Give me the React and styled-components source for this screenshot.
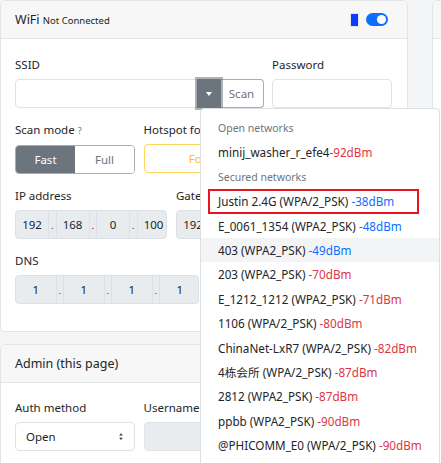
import styled, { createGlobalStyle } from "styled-components"

const GlobalStyle = createGlobalStyle`
  html, body {
    margin: 0;
    padding: 0;
    background: #f4f5f6;
    overflow: hidden;
  }
  body {
    font-family: "Noto Sans", "Open Sans", "Noto Sans CJK SC", sans-serif;
    font-size: 11.5px;
    color: #212529;
  }
`

const networks = [
  { name: "Justin 2.4G (WPA/2_PSK)", rssi: -38, marked: true },
  { name: "E_0061_1354 (WPA2_PSK)", rssi: -48 },
  { name: "403 (WPA2_PSK)", rssi: -49, hover: true },
  { name: "203 (WPA2_PSK)", rssi: -70 },
  { name: "E_1212_1212 (WPA2_PSK)", rssi: -71 },
  { name: "1106 (WPA/2_PSK)", rssi: -80 },
  { name: "ChinaNet-LxR7 (WPA/2_PSK)", rssi: -82 },
  { name: "4栋会所 (WPA/2_PSK)", rssi: -87 },
  { name: "2812 (WPA2_PSK)", rssi: -87 },
  { name: "ppbb (WPA2_PSK)", rssi: -90 },
  { name: "@PHICOMM_E0 (WPA/2_PSK)", rssi: -90 },
]

const IpGroup = ({ parts, cell }) => (
  <Segments>
    {parts.map((p, i) => [
      i > 0 && <Dot key={"d" + i}>.</Dot>,
      <Octet key={"o" + i} $w={cell}>
        {p}
      </Octet>,
    ])}
  </Segments>
)

export default function App() {
  return (
    <>
      <GlobalStyle />
      <Page>
        <Column>
          <Card>
            <CardHeader>
              <span>
                WiFi <Small>Not Connected</Small>
              </span>
              <HeaderTools>
                <BlueMark />
                <Switch />
              </HeaderTools>
            </CardHeader>
            <CardBody $bottom={27}>
              <Grid3>
                <Field $span={2}>
                  <Label>SSID</Label>
                  <InputGroup>
                    <Input />
                    <CaretButton>
                      <Caret />
                    </CaretButton>
                    <ScanButton>Scan</ScanButton>
                  </InputGroup>
                </Field>
                <Field>
                  <Label>Password</Label>
                  <Input $round />
                </Field>
                <Field>
                  <Label>
                    Scan mode <Hint>?</Hint>
                  </Label>
                  <BtnGroup>
                    <ToggleBtn $active>Fast</ToggleBtn>
                    <ToggleBtn>Full</ToggleBtn>
                  </BtnGroup>
                </Field>
                <Field>
                  <Label>Hotspot for WiFi</Label>
                  <WarnButton>Force</WarnButton>
                </Field>
              </Grid3>
              <IpRow>
                <Field>
                  <Label>IP address</Label>
                  <IpGroup parts={["192", "168", "0", "100"]} cell={32} />
                </Field>
                <Field>
                  <Label>Gateway</Label>
                  <IpGroup parts={["192", "168", "0", "1"]} cell={32} />
                </Field>
              </IpRow>
              <Grid2>
                <Field>
                  <Label>DNS</Label>
                  <IpGroup parts={["1", "1", "1", "1"]} cell={39.5} />
                </Field>
              </Grid2>
            </CardBody>
          </Card>
          <Card>
            <CardHeader $h={37}>Admin (this page)</CardHeader>
            <CardBody $top={16}>
              <Grid3>
                <Field>
                  <Label>Auth method</Label>
                  <Select>
                    Open
                    <UpDown viewBox="0 0 8 12">
                      <path d="M4 1.5 L6.5 4.5 H1.5 Z M4 10.5 L6.5 7.5 H1.5 Z" fill="#343a40" />
                    </UpDown>
                  </Select>
                </Field>
                <Field>
                  <Label>Username</Label>
                  <Input $disabled $round />
                </Field>
              </Grid3>
            </CardBody>
          </Card>
        </Column>
        <SideCard>
          <CardHeader />
        </SideCard>

        <Menu>
          <MenuHeader>Open networks</MenuHeader>
          <MenuItem>
            minij_washer_r_efe4<Rssi $weak>-92dBm</Rssi>
          </MenuItem>
          <MenuHeader>Secured networks</MenuHeader>
          {networks.map((n) => (
            <MenuItem key={n.name} $marked={n.marked} $hover={n.hover}>
              {n.name} <Rssi $weak={n.rssi < -60}>{n.rssi}dBm</Rssi>
            </MenuItem>
          ))}
        </Menu>
      </Page>
    </>
  )
}

const Page = styled.div`
  position: relative;
  display: flex;
  align-items: flex-start;
  gap: 24px;
  width: 441px;
  height: 463px;
  overflow: hidden;
`

const Column = styled.div`
  display: flex;
  flex-direction: column;
  gap: 12px;
  width: 408px;
  flex-shrink: 0;
`

const Card = styled.div`
  background: #ffffff;
  border: 1px solid #e3e5e8;
  border-radius: 5px;
  overflow: hidden;
`

const SideCard = styled(Card)`
  width: 120px;
  height: 600px;
  flex-shrink: 0;
`

const CardHeader = styled.div`
  display: flex;
  align-items: center;
  justify-content: space-between;
  height: ${(p) => p.$h || 37}px;
  padding: 0 14px;
  background: #f7f7f7;
  border-bottom: 1px solid #e3e5e8;
  font-size: 12.5px;
  color: #212529;
`

const Small = styled.small`
  font-size: 9.5px;
`

const HeaderTools = styled.div`
  display: flex;
  align-items: center;
  gap: 7px;
  margin-right: 5px;
`

const BlueMark = styled.div`
  box-sizing: border-box;
  width: 9px;
  height: 14px;
  background: #0a3cff;
  border: 1px solid #e6e8ec;
  border-radius: 1px;
`

const Switch = styled.div`
  position: relative;
  width: 22px;
  height: 13px;
  border-radius: 7px;
  background: #0d6efd;

  &::after {
    content: "";
    position: absolute;
    top: 2px;
    right: 2px;
    width: 9px;
    height: 9px;
    border-radius: 50%;
    background: #ffffff;
  }
`

const CardBody = styled.div`
  display: flex;
  flex-direction: column;
  gap: 13px;
  padding: ${(p) => p.$top || 17}px 14px ${(p) => p.$bottom || 20}px;
`

const Grid3 = styled.div`
  display: grid;
  grid-template-columns: repeat(3, 120px);
  column-gap: 8.5px;
  row-gap: 13px;
`

const Grid2 = styled.div`
  display: grid;
  grid-template-columns: 184px 184px;
  column-gap: 9px;
`

const IpRow = styled.div`
  display: grid;
  grid-template-columns: 152px 152px;
  column-gap: 9px;
`

const Field = styled.div`
  display: flex;
  flex-direction: column;
  grid-column: span ${(p) => p.$span || 1};
  min-width: 0;
`

const Label = styled.label`
  display: block;
  line-height: 18px;
  margin-bottom: 5px;
  font-size: 11.5px;
  white-space: nowrap;
`

const Hint = styled.span`
  font-size: 9px;
  color: #6c757d;
`

const InputGroup = styled.div`
  display: flex;
  height: 29px;
`

const Input = styled.div`
  flex: 1;
  height: 29px;
  box-sizing: border-box;
  border: 1px solid #dfe3e7;
  border-radius: ${(p) => (p.$round ? "4px" : "4px 0 0 4px")};
  background: ${(p) => (p.$disabled ? "#e9ecef" : "#ffffff")};
`

const CaretButton = styled.div`
  position: relative;
  width: 24px;
  display: flex;
  align-items: center;
  justify-content: center;
  background: #6c757d;
  box-shadow: 0 0 0 2px rgba(108, 117, 125, 0.55);
  z-index: 1;
`

const Caret = styled.span`
  width: 0;
  height: 0;
  border-left: 3.5px solid transparent;
  border-right: 3.5px solid transparent;
  border-top: 4px solid #ffffff;
`

const ScanButton = styled.div`
  width: 43px;
  box-sizing: border-box;
  display: flex;
  align-items: center;
  justify-content: center;
  border: 1px solid #a7adb3;
  border-left: none;
  border-radius: 0 4px 4px 0;
  color: #6c757d;
  font-size: 11.5px;
`

const BtnGroup = styled.div`
  display: flex;
  height: 29px;
  border: 1px solid #a7adb3;
  border-radius: 4px;
  overflow: hidden;
  box-sizing: border-box;
`

const ToggleBtn = styled.div`
  flex: 1;
  display: flex;
  align-items: center;
  justify-content: center;
  background: ${(p) => (p.$active ? "#6c757d" : "#ffffff")};
  color: ${(p) => (p.$active ? "#ffffff" : "#6c757d")};
  font-size: 11.5px;
`

const WarnButton = styled.div`
  height: 29px;
  box-sizing: border-box;
  display: flex;
  align-items: center;
  justify-content: center;
  border: 1px solid #ffd65a;
  border-radius: 4px;
  color: #ffc107;
  font-size: 11.5px;
`

const Segments = styled.div`
  display: flex;
  height: 29px;
  box-sizing: border-box;
  border: 1px solid #dde1e5;
  border-radius: 4px;
  background: #e9ecef;
  overflow: hidden;
`

const Octet = styled.div`
  width: ${(p) => p.$w}px;
  flex-shrink: 0;
  display: flex;
  align-items: center;
  justify-content: center;
  font-size: 11.5px;
  color: #212529;
`

const Dot = styled.div`
  width: 8.5px;
  flex-shrink: 0;
  display: flex;
  align-items: flex-end;
  justify-content: center;
  padding-bottom: 8px;
  box-sizing: border-box;
  border-left: 1px solid #dde1e5;
  border-right: 1px solid #dde1e5;
  font-size: 9px;
  line-height: 1;
`

const Select = styled.div`
  position: relative;
  height: 29px;
  box-sizing: border-box;
  display: flex;
  align-items: center;
  justify-content: space-between;
  padding: 0 10px;
  border: 1px solid #dfe3e7;
  border-radius: 4px;
  font-size: 11.5px;
`

const UpDown = styled.svg`
  width: 6px;
  height: 9px;
`

const Menu = styled.div`
  position: absolute;
  top: 108px;
  left: 200px;
  width: 240px;
  height: 400px;
  box-sizing: border-box;
  padding: 7px 0;
  background: #ffffff;
  border: 1px solid #dcdfe3;
  border-radius: 4px;
  z-index: 5;
`

const MenuHeader = styled.div`
  padding: 0 17px;
  line-height: 24.4px;
  font-size: 10.5px;
  color: #6c757d;
`

const MenuItem = styled.div`
  position: relative;
  padding: 0 17px;
  line-height: 24.4px;
  white-space: nowrap;
  font-size: 11.7px;
  color: #212529;
  background: ${(p) => (p.$hover ? "#f3f4f6" : "transparent")};

  ${(p) =>
    p.$marked &&
    `
    &::after {
      content: "";
      position: absolute;
      top: 0;
      bottom: 0;
      left: 7px;
      right: 20px;
      border: 2px solid #e8151f;
    }
  `}
`

const Rssi = styled.span`
  color: ${(p) => (p.$weak ? "#dc3545" : "#0d6efd")};
`
